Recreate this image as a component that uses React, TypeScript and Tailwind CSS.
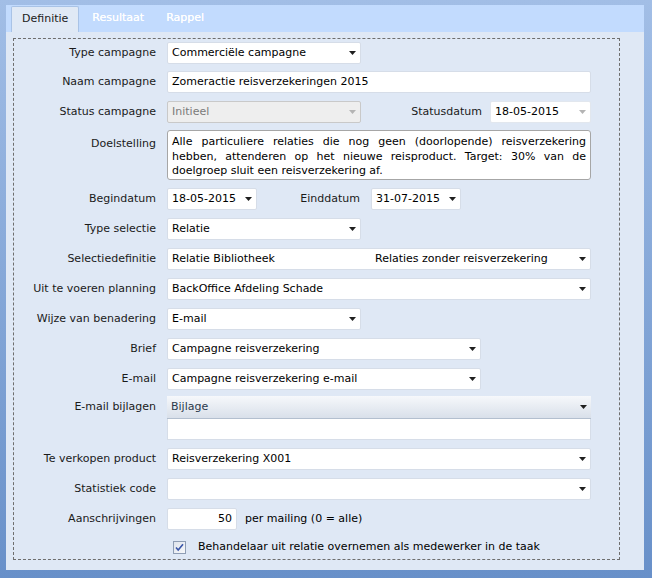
import type { ReactNode } from "react";

const font = { fontFamily: '"DejaVu Sans", Verdana, sans-serif' };

function Arrow({ disabled }: { disabled?: boolean }) {
  return (
    <svg width="7" height="4" viewBox="0 0 7 4" className="shrink-0">
      <path d="M0 0h7L3.5 4z" fill={disabled ? "#b4b4b4" : "#1f1f1f"} />
    </svg>
  );
}

function Label({ children }: { children: ReactNode }) {
  return <div className="w-[142px] shrink-0 text-right pr-0 text-[#1a1a1a]">{children}</div>;
}

function Select({
  w,
  value,
  disabled,
  children,
}: {
  w: string;
  value?: string;
  disabled?: boolean;
  children?: ReactNode;
}) {
  return (
    <div
      className={`${w} h-[22px] flex items-center justify-between pl-[4px] pr-[4px] rounded-[2px] border ${
        disabled ? "bg-[#eeeeee] border-[#c9c9c9] text-[#7a7a7a]" : "bg-white border-[#d6dde8] text-black"
      }`}
    >
      <div className="flex-1 min-w-0 whitespace-nowrap">{children ?? value}</div>
      <Arrow disabled={disabled} />
    </div>
  );
}

function Row({ label, mt, children }: { label: string; mt: string; children: ReactNode }) {
  return (
    <div className={`flex items-center ${mt}`}>
      <Label>{label}</Label>
      <div className="ml-[11px] flex items-center">{children}</div>
    </div>
  );
}

export default function App() {
  return (
    <div
      style={font}
      className="w-[652px] h-[578px] bg-gradient-to-b from-[#a2bee6] to-[#6890c9] pt-[5px] pl-[6px] pr-[8px] pb-[8px] text-[11px] flex flex-col"
    >
      <div className="h-[27px] bg-[#c2dbfe] flex items-end pl-[5px]">
        <div className="h-[26px] px-[10px] bg-[#e0e9f5] border border-b-0 border-[#a9c3e6] rounded-t-[2px] flex items-center text-[#1a1a1a]">
          Definitie
        </div>
        <div className="h-[27px] pl-[13px] pr-[20px] flex items-center font-medium text-white [text-shadow:0_0_0.4px_#ffffff]">
          Resultaat
        </div>
        <div className="h-[27px] px-[2px] flex items-center font-medium text-white [text-shadow:0_0_0.4px_#ffffff]">
          Rappel
        </div>
      </div>
      <div className="flex-1 bg-[#dfe8f5] pt-[6px] pl-[7px] pr-[24px] pb-[10px] flex">
        <div className="flex-1 border border-dashed border-[#6e6e6e] pt-[3px] flex flex-col">
          <Row label="Type campagne" mt="mt-0">
            <Select w="w-[194px]" value="Commerciële campagne" />
          </Row>
          <Row label="Naam campagne" mt="mt-[7px]">
            <div className="w-[424px] h-[22px] bg-white border border-[#d6dde8] rounded-[2px] pl-[4px] flex items-center">
              Zomeractie reisverzekeringen 2015
            </div>
          </Row>
          <Row label="Status campagne" mt="mt-[8px]">
            <Select w="w-[194px]" value="Initieel" disabled />
            <div className="w-[121px] text-right text-[#1a1a1a]">Statusdatum</div>
            <div className="ml-[8px] w-[101px] h-[22px] bg-white border border-[#e2e7ee] rounded-[2px] pl-[4px] pr-[4px] flex items-center justify-between">
              <span>18-05-2015</span>
              <Arrow disabled />
            </div>
          </Row>
          <div className="flex items-start mt-[7px]">
            <div className="pt-[6px]">
              <Label>Doelstelling</Label>
            </div>
            <div className="ml-[11px] w-[424px] h-[50px] bg-white border border-[#a6a6a6] rounded-[3px] px-[4px] pt-[4px] leading-[14.5px] text-black">
              <div className="text-justify [text-align-last:justify]">
                Alle particuliere relaties die nog geen (doorlopende) reisverzekering
              </div>
              <div className="text-justify [text-align-last:justify]">
                hebben, attenderen op het nieuwe reisproduct. Target: 30% van de
              </div>
              <div>doelgroep sluit een reisverzekering af.</div>
            </div>
          </div>
          <Row label="Begindatum" mt="mt-[8px]">
            <Select w="w-[90px]" value="18-05-2015" />
            <div className="w-[103px] text-right text-[#1a1a1a]">Einddatum</div>
            <div className="ml-[11px]">
              <Select w="w-[90px]" value="31-07-2015" />
            </div>
          </Row>
          <Row label="Type selectie" mt="mt-[8px]">
            <Select w="w-[194px]" value="Relatie" />
          </Row>
          <Row label="Selectiedefinitie" mt="mt-[8px]">
            <Select w="w-[424px]">
              <div className="flex">
                <span className="w-[203px]">Relatie Bibliotheek</span>
                <span>Relaties zonder reisverzekering</span>
              </div>
            </Select>
          </Row>
          <Row label="Uit te voeren planning" mt="mt-[8px]">
            <Select w="w-[424px]" value="BackOffice Afdeling Schade" />
          </Row>
          <Row label="Wijze van benadering" mt="mt-[8px]">
            <Select w="w-[194px]" value="E-mail" />
          </Row>
          <Row label="Brief" mt="mt-[8px]">
            <Select w="w-[314px]" value="Campagne reisverzekering" />
          </Row>
          <Row label="E-mail" mt="mt-[8px]">
            <Select w="w-[314px]" value="Campagne reisverzekering e-mail" />
          </Row>
          <div className="flex items-start mt-[6px]">
            <div className="h-[22px] flex items-center">
              <Label>E-mail bijlagen</Label>
            </div>
            <div className="ml-[11px] w-[424px] flex flex-col">
              <div className="h-[23px] bg-gradient-to-b from-[#f6f8fb] to-[#d9e0ea] border-b border-[#b3bfcf] pl-[4px] pr-[4px] flex items-center justify-between text-[#2b3a4c]">
                <span>Bijlage</span>
                <Arrow />
              </div>
              <div className="h-[21px] bg-white border border-t-0 border-[#d6dde8]" />
            </div>
          </div>
          <Row label="Te verkopen product" mt="mt-[8px]">
            <Select w="w-[424px]" value="Reisverzekering X001" />
          </Row>
          <Row label="Statistiek code" mt="mt-[8px]">
            <Select w="w-[424px]" value="" />
          </Row>
          <Row label="Aanschrijvingen" mt="mt-[8px]">
            <div className="w-[70px] h-[22px] bg-white border border-[#d6dde8] rounded-[2px] pr-[4px] flex items-center justify-end text-black">
              50
            </div>
            <span className="ml-[8px] text-black">per mailing (0 = alle)</span>
          </Row>
          <div className="flex items-center mt-[9px] ml-[159px]">
            <div className="w-[13px] h-[13px] border border-[#8e9db4] bg-gradient-to-br from-[#dfe4ec] to-[#f7f8fa] flex items-center justify-center">
              <svg width="9" height="9" viewBox="0 0 9 9">
                <path d="M1 4.5l2.2 2.6L8 1.2" fill="none" stroke="#3a56a8" strokeWidth="1.6" />
              </svg>
            </div>
            <span className="ml-[12px] text-black">Behandelaar uit relatie overnemen als medewerker in de taak</span>
          </div>
        </div>
      </div>
    </div>
  );
}
